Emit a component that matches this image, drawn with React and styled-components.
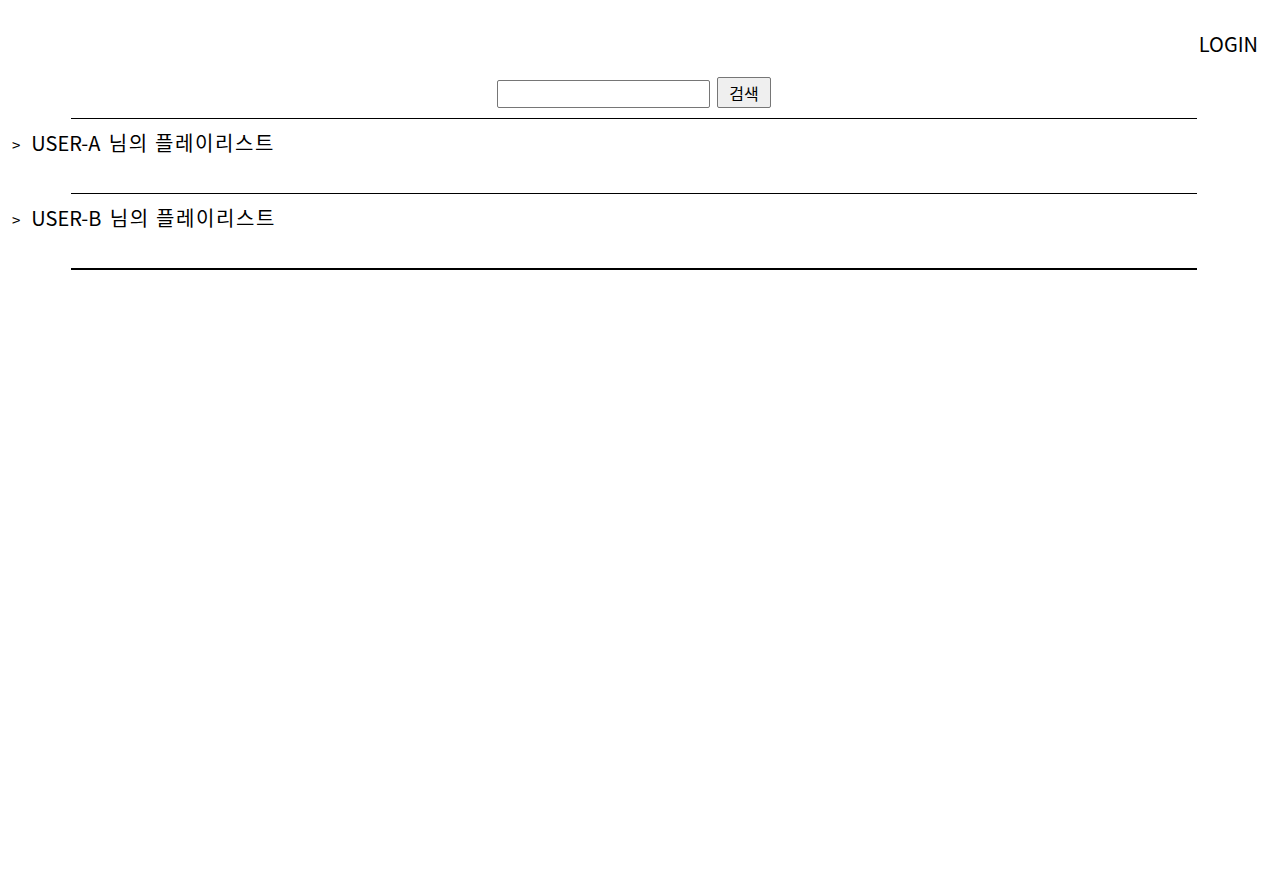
import React from 'react'
import styled, { createGlobalStyle } from 'styled-components'

const GlobalStyle = createGlobalStyle`
  body {
    margin: 0;
    background: #fff;
    color: #000;
    font-family: "Noto Sans CJK KR", "Noto Sans", sans-serif;
  }
`

const Page = styled.div`
  padding: 0 8px;
`

const Header = styled.header`
  display: flex;
  justify-content: flex-end;
  align-items: center;
  height: 70px;
  padding: 16px 2px 0 0;
  box-sizing: border-box;
`

const LoginLink = styled.a`
  font-size: 20px;
  color: #000;
  text-decoration: none;
  cursor: pointer;
`

const SearchForm = styled.form`
  display: flex;
  justify-content: center;
  align-items: center;
  gap: 7px;
  height: 31px;
  margin: 7px 0 10px;
`

const SearchInput = styled.input`
  width: 213px;
  height: 28px;
  box-sizing: border-box;
  margin-top: 2px;
  border: 1px solid #767676;
  border-radius: 2px;
  padding: 1px 2px;
  font-size: 14px;
`

const SearchButton = styled.button`
  width: 54px;
  height: 31px;
  box-sizing: border-box;
  border: 1px solid #767676;
  border-radius: 2px;
  background: #efefef;
  font-family: "Noto Sans CJK KR", sans-serif;
  font-size: 16px;
  color: #000;
  padding: 0;
`

const Divider = styled.div`
  width: 90%;
  height: ${p => (p.$thick ? 2 : 1)}px;
  margin: 0 auto;
  background: #000;
`

const Item = styled.div`
  display: flex;
  align-items: baseline;
  gap: 11px;
  height: 74px;
  box-sizing: border-box;
  padding: 9px 0 0 4px;
  font-size: 20px;
  line-height: 30px;
`

const Arrow = styled.span`
  font-size: 15px;
`

const Title = styled.span`
  word-spacing: 4px;
`

const Suffix = styled.span`
  word-spacing: 0;
  letter-spacing: 1.6px;
`

const playlists = ['USER-A', 'USER-B']

const App = () => {
  return (
    <Page>
      <GlobalStyle />
      <Header>
        <LoginLink>LOGIN</LoginLink>
      </Header>
      <SearchForm onSubmit={e => e.preventDefault()}>
        <SearchInput type="text" />
        <SearchButton type="submit">검색</SearchButton>
      </SearchForm>
      {playlists.map(user => (
        <React.Fragment key={user}>
          <Divider />
          <Item>
            <Arrow>&gt;</Arrow>
            <Title>
              {user} <Suffix>님의 플레이리스트</Suffix>
            </Title>
          </Item>
        </React.Fragment>
      ))}
      <Divider $thick />
    </Page>
  )
}

export default App
